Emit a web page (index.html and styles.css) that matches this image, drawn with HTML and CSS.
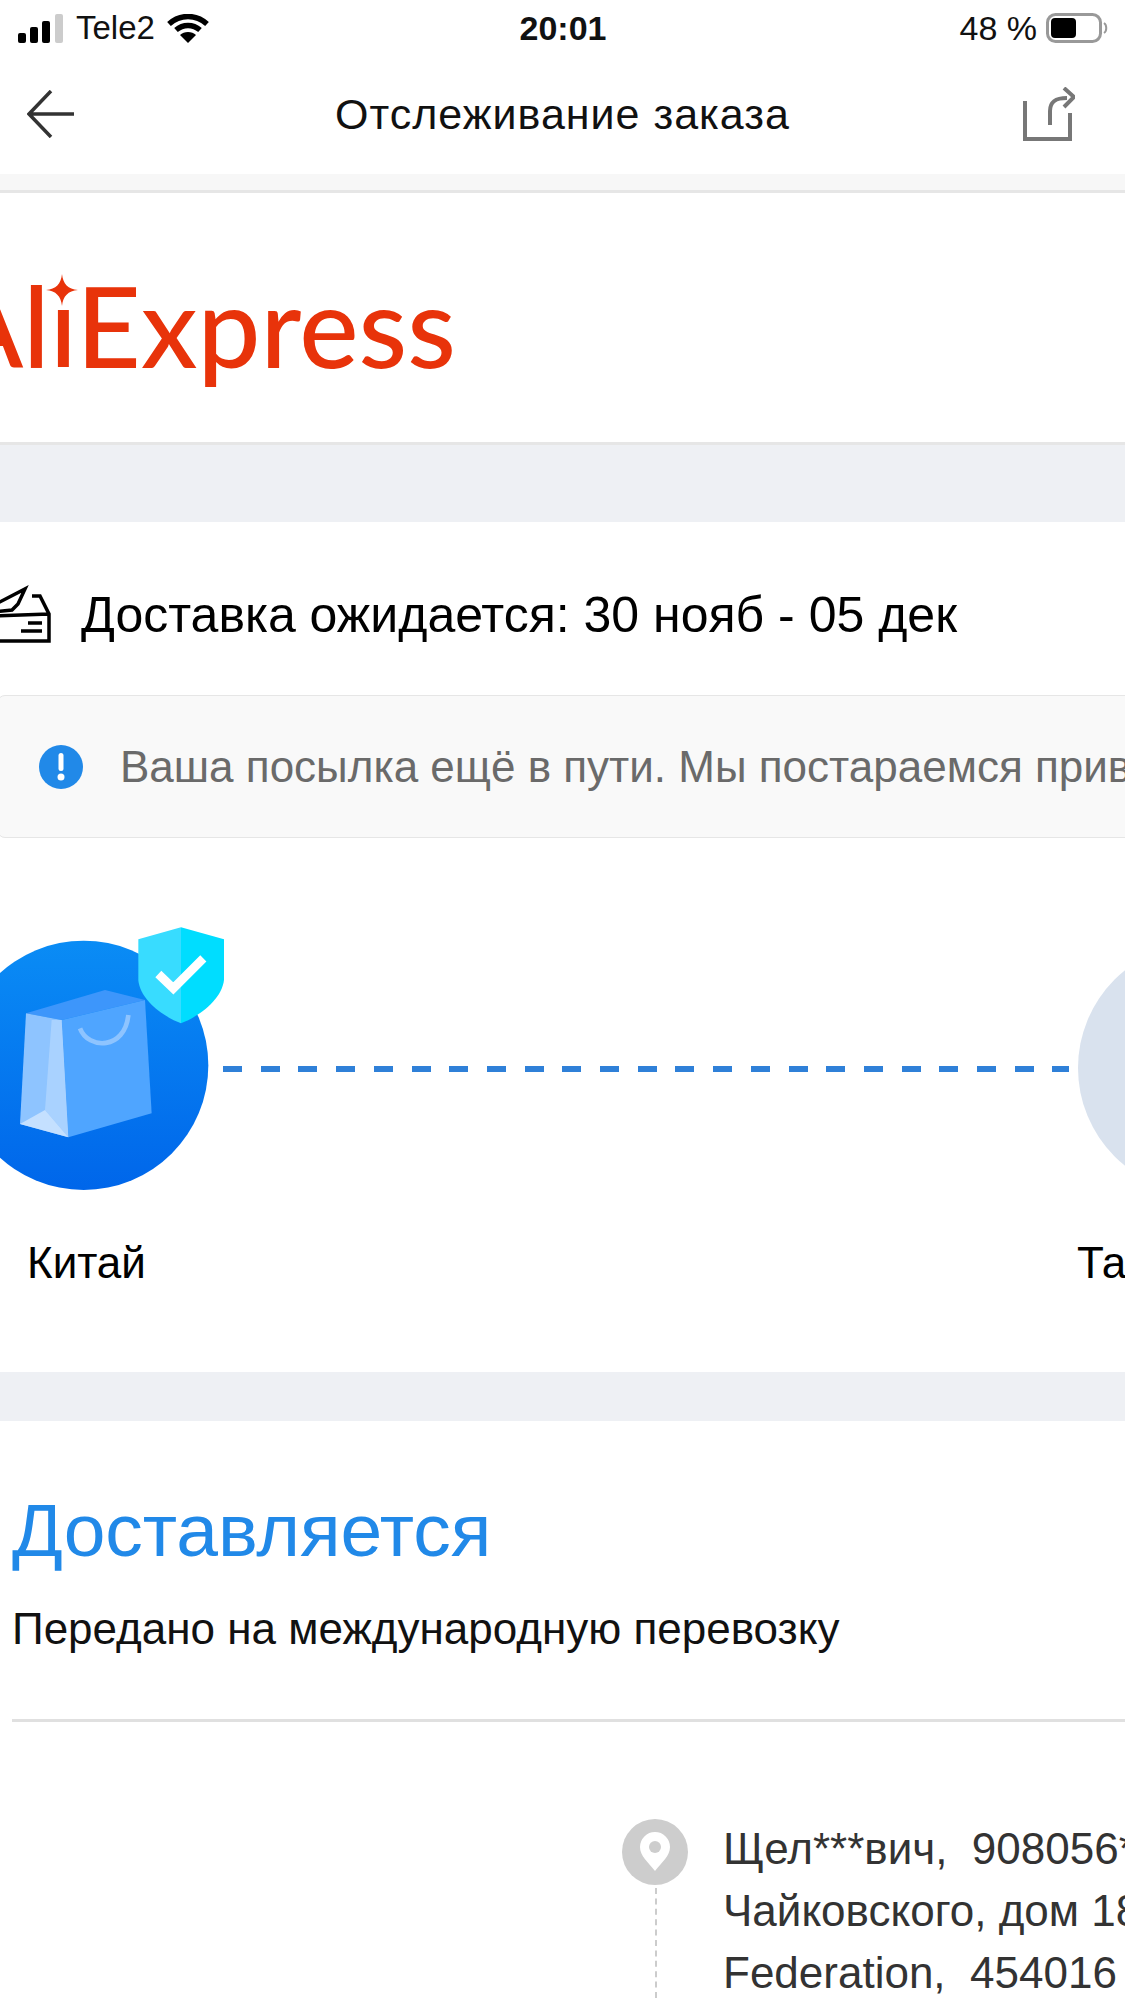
FILE: index.html
```html
<!DOCTYPE html>
<html lang="ru">
<head>
    <meta charset="UTF-8">
    <meta name="viewport" content="width=device-width, initial-scale=1.0">
    <title>Отслеживание заказа</title>
    <link rel="stylesheet" href="styles.css">
</head>
<body>
    <div class="status-bar">
        <div class="status-left">
            <svg class="signal" width="46" height="29" viewBox="0 0 46 29">
                <rect x="0" y="19" width="8" height="10" rx="2" fill="#000"/>
                <rect x="12" y="13" width="8" height="16" rx="2" fill="#000"/>
                <rect x="24" y="7" width="8" height="22" rx="2" fill="#000"/>
                <rect x="37" y="0" width="8" height="29" rx="2" fill="#ccc"/>
            </svg>
            <span>Tele2</span>
            <svg class="wifi" width="42" height="29" viewBox="0 0 42 29">
                <path d="M2 10 C13 0 29 0 40 10" fill="none" stroke="#000" stroke-width="5.5"/>
                <path d="M9 16 C16 10 26 10 33 16" fill="none" stroke="#000" stroke-width="5.5"/>
                <path d="M21 29 L13 21 C17 17 25 17 29 21 Z" fill="#000"/>
            </svg>
        </div>
        <div class="status-time">20:01</div>
        <div class="status-right">
            <span>48 %</span>
            <svg class="battery" width="62" height="30" viewBox="0 0 62 30">
                <rect x="1.5" y="1.5" width="53" height="27" rx="8" fill="none" stroke="#999" stroke-width="3"/>
                <rect x="5" y="5" width="25" height="20" rx="4" fill="#000"/>
                <path d="M58 10 C61 12 61 18 58 20" fill="none" stroke="#999" stroke-width="2"/>
            </svg>
        </div>
    </div>

    <div class="nav-bar">
        <svg class="back-icon" width="47" height="48" viewBox="0 0 47 48">
            <path d="M24 1 L2 24 L24 47 M2 24 H47" fill="none" stroke="#333" stroke-width="3.5"/>
        </svg>
        <div class="nav-title">Отслеживание заказа</div>
        <svg class="share-icon" width="52" height="54" viewBox="0 0 52 54">
            <path d="M2 14 V52 H47 V26" fill="none" stroke="#777" stroke-width="4"/>
            <path d="M27 38 V24 C27 14 33 11 44 11" fill="none" stroke="#777" stroke-width="4"/>
            <path d="M41 1 L51 10 L41 20" fill="none" stroke="#777" stroke-width="4"/>
        </svg>
    </div>

    <div class="band-thin"></div>

    <div class="logo-section">
        <div class="logo">
            <span class="logo-text">AliExpress</span>
            <svg class="logo-star" width="32" height="32" viewBox="0 0 32 32">
                <path d="M16 0 C17 10 22 15 32 16 C22 17 17 22 16 32 C15 22 10 17 0 16 C10 15 15 10 16 0 Z" fill="#e8330a"/>
            </svg>
        </div>
    </div>

    <div class="band"></div>

    <div class="delivery-row">
        <svg class="box-icon" width="52" height="58" viewBox="0 0 52 58">
            <path d="M-6 19 L25 3 L18 18 L12 24 L-6 26" fill="none" stroke="#000" stroke-width="3.5"/>
            <path d="M32 10 H40 L49 28 V55 H-6 V30 L49 28" fill="none" stroke="#000" stroke-width="3.5"/>
            <path d="M28 37 H42 M21 45 H42" stroke="#000" stroke-width="3.5"/>
        </svg>
        <span class="delivery-text">Доставка ожидается: 30 нояб - 05 дек</span>
    </div>

    <div class="notice">
        <svg class="info-icon" width="44" height="44" viewBox="0 0 44 44">
            <circle cx="22" cy="22" r="22" fill="#2189e8"/>
            <rect x="19.5" y="8" width="5" height="18" rx="2.5" fill="#fff"/>
            <circle cx="22" cy="32" r="3.5" fill="#fff"/>
        </svg>
        <span class="notice-text">Ваша посылка ещё в пути. Мы постараемся привезти её вовремя.</span>
    </div>

    <div class="tracker">
        <div class="tracker-line">
            <svg class="origin" width="300" height="320" viewBox="0 0 900 960">
                <defs>
                    <linearGradient id="disc" x1="0" y1="0" x2="0" y2="1">
                        <stop offset="0" stop-color="#0a8cf5"/>
                        <stop offset="1" stop-color="#0066ea"/>
                    </linearGradient>
                </defs>
                <circle cx="251" cy="496" r="374" fill="url(#disc)"/>
                <polygon points="78,340 315,270 435,300 185,360" fill="#3d96fb"/>
                <polygon points="185,360 435,300 455,640 205,712" fill="#4fa5ff"/>
                <polygon points="78,340 185,360 205,712 60,672" fill="#8ec4ff"/>
                <polygon points="155,360 185,360 205,712 135,630" fill="#a9d2ff"/>
                <polygon points="60,672 135,630 205,712" fill="#c4e0ff"/>
                <path d="M240 385 C265 450 375 450 385 345" fill="none" stroke="#8ec4ff" stroke-width="14"/>
                <path d="M543 82 L415 118 V240 C420 300 490 350 543 370 Z" fill="#38dcff"/>
                <path d="M543 82 L672 118 V240 C665 300 595 350 543 370 Z" fill="#00ddff"/>
                <path d="M475 222 L520 265 L610 175" fill="none" stroke="#fff" stroke-width="26"/>
            </svg>
            <div class="dashes"></div>
            <div class="dest-circle"></div>
        </div>
        <div class="tracker-labels">
            <span>Китай</span>
            <span>Таможня</span>
        </div>
    </div>

    <div class="band band-plain"></div>

    <div class="status-section">
        <div class="status-heading">Доставляется</div>
        <div class="status-sub">Передано на международную перевозку</div>
        <div class="divider"></div>
        <div class="address">
            <div class="pin-col">
                <svg width="68" height="68" viewBox="0 0 68 68">
                    <circle cx="34" cy="34" r="33" fill="#cdcdcd"/>
                    <path d="M34 53 C27 44 19 38 19 29 A15 15 0 0 1 49 29 C49 38 41 44 34 53 Z" fill="#fff"/>
                    <circle cx="34" cy="29" r="6" fill="#cdcdcd"/>
                </svg>
                <div class="pin-trail"></div>
            </div>
            <div class="address-text">
                <div>Щел***вич,&nbsp; 908056***</div>
                <div>Чайковского, дом 18</div>
                <div>Federation,&nbsp; 454016</div>
            </div>
        </div>
    </div>
</body>
</html>
```

FILE: styles.css
```css
html, body {
    margin: 0;
    height: 2000px;
    overflow: hidden;
}
body {
    font-family: "Liberation Sans", Arial, sans-serif;
    background: #fff;
    color: #000;
    width: 1125px;
}
svg {
    display: block;
    flex-shrink: 0;
}

/* status bar */
.status-bar {
    height: 70px;
    display: grid;
    grid-template-columns: 1fr auto 1fr;
    align-items: center;
    padding: 0 17px 14px 18px;
    box-sizing: border-box;
    font-size: 33px;
    color: #111;
}
.status-left {
    display: flex;
    align-items: center;
    gap: 12px;
}
.status-time {
    font-weight: bold;
    font-size: 34px;
}
.status-right {
    display: flex;
    align-items: center;
    justify-content: flex-end;
    gap: 9px;
    font-size: 34px;
}

/* nav */
.nav-bar {
    height: 104px;
    display: grid;
    grid-template-columns: 1fr auto 1fr;
    align-items: center;
    padding: 0 27px 16px 27px;
    box-sizing: border-box;
}
.nav-title {
    font-size: 43px;
    letter-spacing: 1px;
    color: #111;
}
.share-icon {
    justify-self: end;
    margin-right: 23px;
}
.band-thin {
    height: 16px;
    background: #f7f7f7;
    border-bottom: 3px solid #e6e6e6;
}

/* logo */
.logo-section {
    height: 249px;
    border-bottom: 3px solid #e6e6e6;
}
.logo {
    position: relative;
    height: 249px;
    margin-left: -53px;
}
.logo-text {
    display: block;
    font-family: Lato, sans-serif;
    font-weight: 500;
    font-size: 112px;
    line-height: 264px;
    color: #e8330a;
}
.logo-star {
    position: absolute;
    left: 99px;
    top: 81px;
    background: #fff;
    border-radius: 50%;
}

.band {
    height: 77px;
    background: #eef0f4;
}
.band-plain {
    height: 49px;
}

/* delivery */
.delivery-row {
    height: 173px;
    display: flex;
    align-items: center;
    gap: 29px;
    padding-top: 12px;
    box-sizing: border-box;
}
.box-icon {
    overflow: visible;
}
.delivery-text {
    font-size: 50px;
    white-space: nowrap;
}
.notice {
    height: 143px;
    margin: 0 -20px 0 -3px;
    background: #f9f9f9;
    border: 1px solid #e6e6e6;
    border-radius: 8px;
    box-sizing: border-box;
    display: flex;
    align-items: center;
    gap: 37px;
    padding-left: 41px;
    white-space: nowrap;
    overflow: hidden;
}
.notice-text {
    font-size: 44px;
    color: #6a6a6a;
}

/* tracker */
.tracker {
    height: 534px;
    padding-top: 62px;
    box-sizing: border-box;
    overflow: hidden;
}
.tracker-line {
    height: 320px;
    display: flex;
    align-items: center;
    width: 1400px;
}
.origin {
    margin-right: -77px;
}
.dashes {
    width: 846px;
    height: 6px;
    margin-top: 18px;
    background: repeating-linear-gradient(90deg, #2f80d8 0, #2f80d8 19px, transparent 19px, transparent 37.7px);
}
.dest-circle {
    width: 250px;
    height: 250px;
    margin: 16px 0 0 9px;
    border-radius: 50%;
    background: #d9e2ee;
    flex-shrink: 0;
}
.tracker-labels {
    display: flex;
    gap: 931px;
    width: 1400px;
    margin: 18px 0 0 27px;
    font-size: 44px;
}

/* status section */
.status-section {
    padding: 0 0 0 12px;
    overflow: hidden;
}
.status-heading {
    margin-top: 68px;
    font-size: 75px;
    line-height: 82px;
    color: #2189e8;
}
.status-sub {
    margin-top: 34px;
    font-size: 44px;
    line-height: 48px;
    color: #111;
}
.divider {
    height: 3px;
    margin-top: 66px;
    background: #e0e0e0;
}
.address {
    display: flex;
    gap: 34px;
    margin: 96px 0 0 609px;
}
.pin-col {
    width: 68px;
    flex-shrink: 0;
}
.pin-trail {
    height: 110px;
    margin: 2px 0 0 34px;
    border-left: 2px dashed #ccc;
}
.address-text {
    font-size: 44px;
    line-height: 62px;
    color: #333;
    white-space: nowrap;
}
```
